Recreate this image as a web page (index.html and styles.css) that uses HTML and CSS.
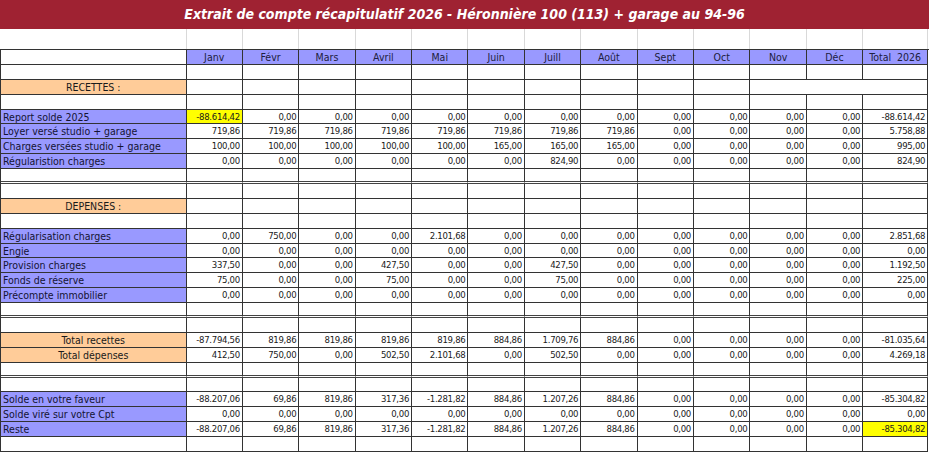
FILE: index.html
```html
<!DOCTYPE html>
<html lang="fr">
<head>
<meta charset="utf-8">
<title>Extrait de compte récapitulatif 2026</title>
<link rel="stylesheet" href="styles.css">
</head>
<body>
<div class="title">Extrait de compte récapitulatif 2026 - Héronnière 100 (113) + garage au 94-96</div>
<div class="gridlines">
  <div></div><div></div><div></div><div></div><div></div><div></div><div></div><div></div><div></div><div></div><div></div><div></div><div></div><div></div>
</div>
<div class="sheet" id="sheet"></div>
<script src="app.js"></script>
</body>
</html>
```

FILE: app.js
```js
(function () {
  var months = ["Janv","Févr","Mars","Avril","Mai","Juin","Juill","Août","Sept","Oct","Nov","Déc","Total  2026"];
  var z = "0,00";
  function zeros(n){ var a=[]; for(var i=0;i<n;i++) a.push(z); return a; }
  var rows = [
    {type:"head"},
    {type:"blank"},
    {type:"section", label:"RECETTES :", merge:true},
    {type:"blank"},
    {type:"data", label:"Report solde 2025", vals:["-88.614,42"].concat(zeros(11),["-88.614,42"]), yellow:[0]},
    {type:"data", label:"Loyer versé studio + garage", vals:["719,86","719,86","719,86","719,86","719,86","719,86","719,86","719,86",z,z,z,z,"5.758,88"]},
    {type:"data", label:"Charges versées studio + garage", vals:["100,00","100,00","100,00","100,00","100,00","165,00","165,00","165,00",z,z,z,z,"995,00"]},
    {type:"data", label:"Régularistion charges", vals:[z,z,z,z,z,z,"824,90",z,z,z,z,z,"824,90"]},
    {type:"blank", dbl:true},
    {type:"blank"},
    {type:"section", label:"DEPENSES :"},
    {type:"blank"},
    {type:"data", label:"Régularisation charges", vals:[z,"750,00",z,z,"2.101,68",z,z,z,z,z,z,z,"2.851,68"]},
    {type:"data", label:"Engie", vals:zeros(13)},
    {type:"data", label:"Provision charges", vals:["337,50",z,z,"427,50",z,z,"427,50",z,z,z,z,z,"1.192,50"]},
    {type:"data", label:"Fonds de réserve", vals:["75,00",z,z,"75,00",z,z,"75,00",z,z,z,z,z,"225,00"]},
    {type:"data", label:"Précompte immobilier", vals:zeros(13)},
    {type:"blank", dbl:true},
    {type:"blank"},
    {type:"total", label:"Total recettes", vals:["-87.794,56","819,86","819,86","819,86","819,86","884,86","1.709,76","884,86",z,z,z,z,"-81.035,64"]},
    {type:"total", label:"Total dépenses", vals:["412,50","750,00",z,"502,50","2.101,68",z,"502,50",z,z,z,z,z,"4.269,18"]},
    {type:"blank", dbl:true},
    {type:"blank"},
    {type:"data", label:"Solde en votre faveur", vals:["-88.207,06","69,86","819,86","317,36","-1.281,82","884,86","1.207,26","884,86",z,z,z,z,"-85.304,82"]},
    {type:"data", label:"Solde viré sur votre Cpt", vals:zeros(13)},
    {type:"data", label:"Reste", vals:["-88.207,06","69,86","819,86","317,36","-1.281,82","884,86","1.207,26","884,86",z,z,z,z,"-85.304,82"], yellow:[12]},
    {type:"blank"}
  ];
  var sheet = document.getElementById("sheet");
  function cell(cls, text) {
    var d = document.createElement("div");
    d.className = "c " + cls;
    if (text) d.textContent = text;
    sheet.appendChild(d);
    return d;
  }
  rows.forEach(function (r) {
    var extra = r.dbl ? " dbl" : "";
    if (r.type === "head") {
      cell("lbl" + extra, "");
      months.forEach(function (m) { cell("hd" + extra, m); });
    } else if (r.type === "blank") {
      cell("lbl" + extra, "");
      for (var i = 0; i < 13; i++) cell("num" + extra, "");
    } else if (r.type === "section") {
      cell("lbl orange center" + extra, r.label);
      var n = r.merge ? 10 : 13;
      for (var j = 0; j < n; j++) cell("num" + extra, "");
      if (r.merge) { cell("num merged" + extra, ""); }
    } else {
      var lc = r.type === "total" ? "lbl orange center" : "lbl blue";
      cell(lc + extra, r.label);
      r.vals.forEach(function (v, k) {
        var y = r.yellow && r.yellow.indexOf(k) >= 0 ? " yellow" : "";
        cell("num" + y + extra, v);
      });
    }
  });
})();
```

FILE: styles.css
```css
html, body {
  margin: 0;
  padding: 0;
  background: #ffffff;
}
body {
  width: 929px;
  font-family: "DejaVu Sans Condensed", "DejaVu Sans", sans-serif;
  color: #1a1a1a;
}
.title {
  height: 29px;
  background: #9f2232;
  color: #ffffff;
  font-weight: bold;
  font-style: italic;
  font-size: 14px;
  line-height: 29px;
  text-align: center;
  white-space: nowrap;
}
.gridlines,
.sheet {
  display: grid;
  grid-template-columns: 185.5px repeat(12, 56.4px) 65px;
}
.gridlines {
  height: 20px;
  padding-left: 1px;
}
.gridlines div {
  border-right: 1px solid #d9d9d9;
}
.sheet {
  grid-auto-rows: 14.9px;
  border-left: 1px solid #333;
  border-top: 1px solid #333;
}
.c {
  box-sizing: border-box;
  border-right: 1px solid #333;
  border-bottom: 1px solid #333;
  font-size: 10.5px;
  line-height: 14px;
  white-space: pre;
  overflow: hidden;
}
.c.dbl {
  border-bottom: 3px double #444;
}
.lbl {
  padding-left: 2px;
}
.blue {
  background: #9999ff;
  color: #141433;
}
.orange {
  background: #ffcc99;
}
.center {
  text-align: center;
  padding-left: 0;
}
.hd {
  background: #9999ff;
  text-align: center;
  color: #202040;
}
.num {
  text-align: right;
  padding-right: 2px;
  font-size: 9.5px;
  letter-spacing: -0.3px;
}
.yellow {
  background: #ffff00;
}
.merged {
  grid-column: span 3;
}
```
